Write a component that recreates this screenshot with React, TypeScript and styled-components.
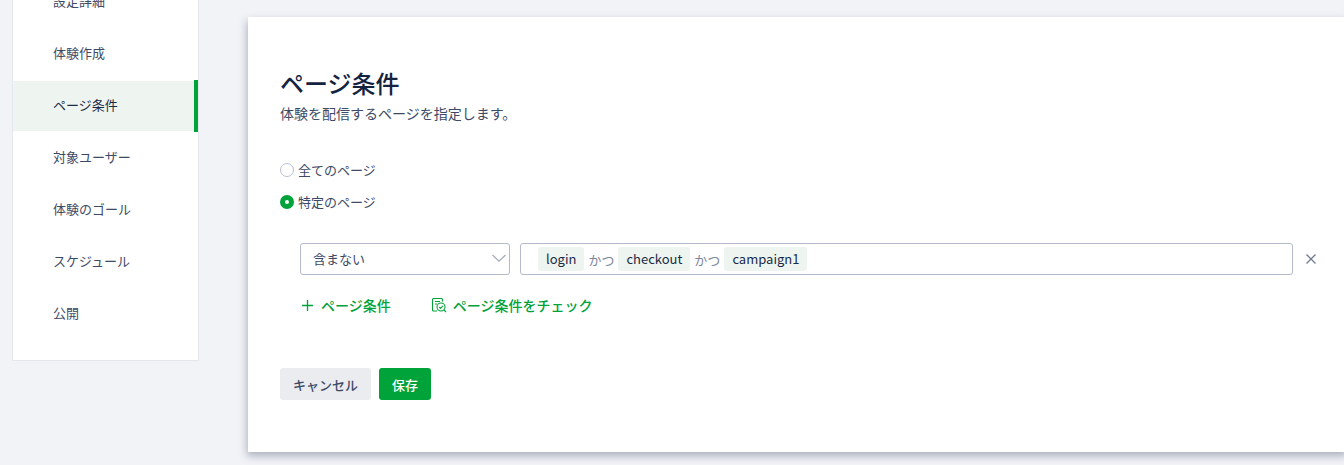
import React from "react";
import styled, { createGlobalStyle } from "styled-components";

const Global = createGlobalStyle`
  html, body { margin: 0; padding: 0; height: 465px; overflow: hidden; background: #f1f3f7; }
  * { box-sizing: border-box; }
  body { font-family: "Noto Sans CJK JP", "Noto Sans", sans-serif; color: #1b2a47; }
`;

const Page = styled.div`
  display: flex;
  align-items: flex-start;
  height: 465px;
  overflow: hidden;
  padding-left: 12px;
`;

const Sidebar = styled.nav`
  flex: none;
  width: 187px;
  margin-top: -23px;
  padding: 0 0 21px;
  background: #fff;
  border: 1px solid #e4e7ee;
  border-top: 0;
  display: flex;
  flex-direction: column;
  gap: 2px;
`;

const NavItem = styled.div<{ $active?: boolean }>`
  position: relative;
  height: 50px;
  display: flex;
  align-items: center;
  padding: 0 0 3px 40px;
  font-size: 13px;
  color: ${(p) => (p.$active ? "#1b2a47" : "#3d4a66")};
  background: ${(p) => (p.$active ? "#eef5f0" : "transparent")};
  ${(p) =>
    p.$active
      ? `&::after { content: ""; position: absolute; right: 0; top: -1px; bottom: -1px; width: 4px; background: #00a33a; }`
      : ""}
`;

const Card = styled.main`
  flex: none;
  width: 1100px;
  height: 435px;
  margin: 17px 0 0 49px;
  padding: 50px 32px 0;
  background: #fff;
  box-shadow: -1px 4px 8px rgba(60, 72, 100, 0.38);
`;

const Title = styled.h1`
  margin: 0;
  font-size: 24px;
  line-height: 32px;
  font-weight: 500;
  color: #14233f;
`;

const Lead = styled.p`
  margin: 4px 0 0;
  font-size: 14px;
  line-height: 20px;
  color: #3d4a66;
`;

const RadioGroup = styled.div`
  margin-top: 36px;
  display: flex;
  flex-direction: column;
  gap: 12px;
`;

const RadioRow = styled.label`
  display: flex;
  align-items: center;
  gap: 4px;
  height: 20px;
  font-size: 13px;
  color: #3d4a66;
`;

const RadioDot = styled.span<{ $on?: boolean }>`
  width: 14px;
  height: 14px;
  margin-top: 2px;
  border-radius: 50%;
  flex: none;
  background: #fff;
  border: ${(p) => (p.$on ? "5px solid #00a33a" : "1px solid #b9bfce")};
`;

const ConditionRow = styled.div`
  margin-top: 32px;
  padding-left: 20px;
  display: flex;
  align-items: center;
`;

const SelectBox = styled.div`
  flex: none;
  width: 210px;
  height: 32px;
  padding: 0 2px 2px 12px;
  display: flex;
  align-items: center;
  justify-content: space-between;
  font-size: 13px;
  color: #3d4a66;
  border: 1px solid #b4bacb;
  border-radius: 3px;
`;

const TagInput = styled.div`
  flex: none;
  width: 773px;
  height: 32px;
  margin-left: 10px;
  padding-left: 17px;
  display: flex;
  align-items: center;
  border: 1px solid #b4bacb;
  border-radius: 3px;
`;

const Tag = styled.span`
  height: 24px;
  padding: 0 8px 2px;
  display: flex;
  align-items: center;
  font-size: 13px;
  color: #1b2a47;
  background: #eef5f0;
  border-radius: 3px;
`;

const Joiner = styled.span`
  width: 34px;
  text-align: center;
  font-size: 13px;
  color: #7c869c;
`;

const Remove = styled.span`
  margin-left: 12px;
  display: flex;
  color: #6f7a92;
`;

const Actions = styled.div`
  margin-top: 20px;
  padding-left: 20px;
  display: flex;
  align-items: center;
  gap: 40px;
`;

const LinkAction = styled.span`
  display: flex;
  align-items: center;
  gap: 6px;
  height: 20px;
  font-size: 14px;
  font-weight: 500;
  color: #00a33a;
`;

const Footer = styled.div`
  margin-top: 53px;
  display: flex;
  gap: 8px;
`;

const Button = styled.button<{ $primary?: boolean }>`
  height: 32px;
  padding: 0 13px;
  border: 0;
  border-radius: 3px;
  font-family: inherit;
  font-size: 13px;
  font-weight: 500;
  color: ${(p) => (p.$primary ? "#fff" : "#3d4a66")};
  background: ${(p) => (p.$primary ? "#00a33a" : "#ebecef")};
`;

const nav = ["設定詳細", "体験作成", "ページ条件", "対象ユーザー", "体験のゴール", "スケジュール", "公開"];

export default function App() {
  return (
    <Page>
      <Global />
      <Sidebar>
        {nav.map((n) => (
          <NavItem key={n} $active={n === "ページ条件"}>{n}</NavItem>
        ))}
      </Sidebar>
      <Card>
        <Title>ページ条件</Title>
        <Lead>体験を配信するページを指定します。</Lead>
        <RadioGroup>
          <RadioRow><RadioDot />全てのページ</RadioRow>
          <RadioRow><RadioDot $on />特定のページ</RadioRow>
        </RadioGroup>
        <ConditionRow>
          <SelectBox>
            含まない
            <svg width="16" height="16" viewBox="0 0 16 16" fill="none" stroke="#a3aabb" strokeWidth="1.2">
              <path d="M1.5 5 L8 11.2 L14.5 5" />
            </svg>
          </SelectBox>
          <TagInput>
            <Tag>login</Tag>
            <Joiner>かつ</Joiner>
            <Tag>checkout</Tag>
            <Joiner>かつ</Joiner>
            <Tag>campaign1</Tag>
          </TagInput>
          <Remove>
            <svg width="12" height="12" viewBox="0 0 12 12" fill="none" stroke="currentColor" strokeWidth="1.3">
              <path d="M1.5 1.5 L10.5 10.5 M10.5 1.5 L1.5 10.5" />
            </svg>
          </Remove>
        </ConditionRow>
        <Actions>
          <LinkAction>
            <svg width="15" height="15" viewBox="0 0 15 15" fill="none" stroke="currentColor" strokeWidth="1.3">
              <path d="M7.5 2 V13 M2 7.5 H13" />
            </svg>
            ページ条件
          </LinkAction>
          <LinkAction>
            <svg width="16" height="16" viewBox="0 0 16 16" fill="none" stroke="currentColor" strokeWidth="1.1">
              <path d="M6 14 H2.5 A1 1 0 0 1 1.5 13 V2.5 A1 1 0 0 1 2.5 1.5 H10.5 A1 1 0 0 1 11.5 2.5 V4.5" />
              <path d="M4 4.5 H9 M4 7 H6" />
              <circle cx="10" cy="10" r="4" />
              <path d="M8.2 10 L9.6 11.4 L11.9 8.9 M13 13 L15 15" />
            </svg>
            ページ条件をチェック
          </LinkAction>
        </Actions>
        <Footer>
          <Button>キャンセル</Button>
          <Button $primary>保存</Button>
        </Footer>
      </Card>
    </Page>
  );
}
